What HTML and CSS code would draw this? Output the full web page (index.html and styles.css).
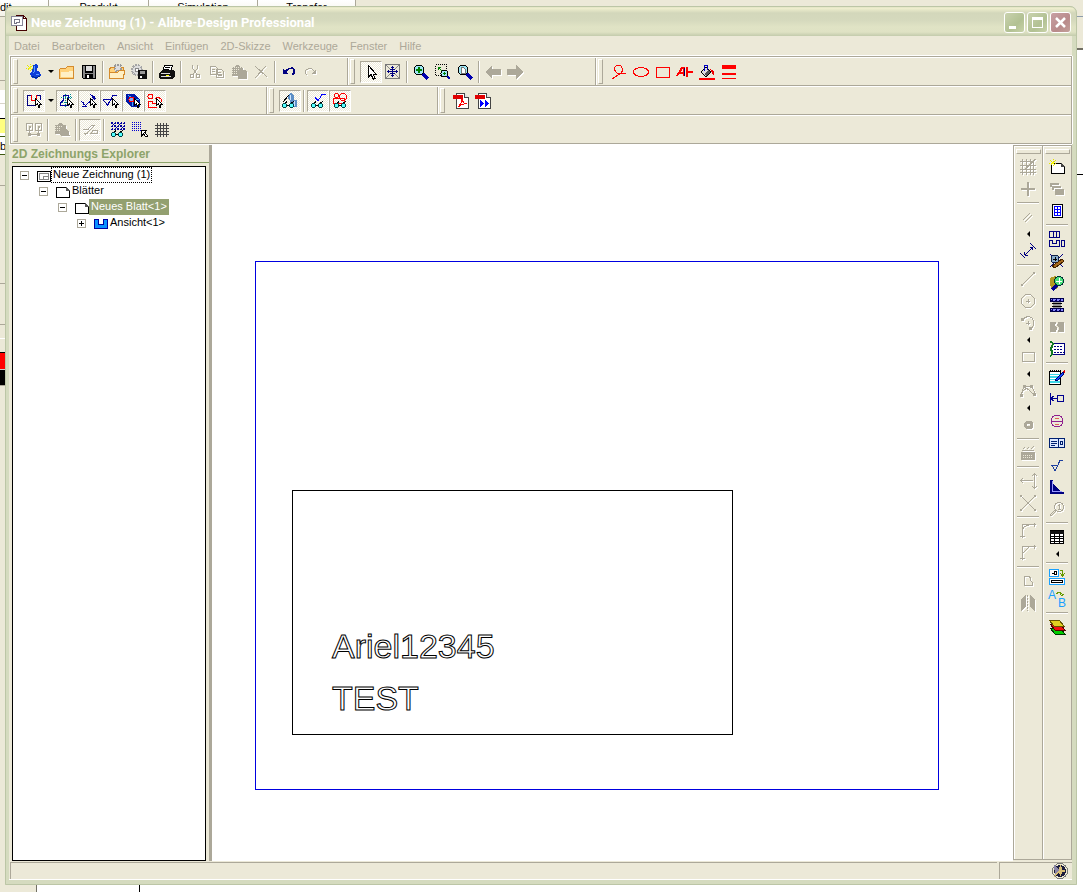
FILE: index.html
```html
<!DOCTYPE html>
<html lang="de">
<head>
    <meta charset="utf-8">
    <title>Neue Zeichnung (1) - Alibre-Design Professional</title>
    <link rel="stylesheet" href="styles.css">
</head>
<body>
    <!-- Shared icon parts -->
    <svg class="sprite" aria-hidden="true">
        <symbol id="cursor" viewBox="0 0 7 10"><path d="M.5.5V7.500L2.500 6L4 9.500L5 9L4 6H6Z" fill="#fff" stroke="#000"/></symbol>
        <symbol id="glasses" viewBox="0 0 14 7"><path d="M2 3L5 .5M8 3L12 .5M4 4.500H8" stroke="#000" fill="none"/><circle cx="2.500" cy="4.500" r="2" fill="#5ff" stroke="#044"/><circle cx="9.500" cy="4.500" r="2" fill="#5ff" stroke="#044"/></symbol>
        <symbol id="sparkle" viewBox="0 0 8 8"><path d="M4 0V8M0 4H8M1 1L7 7M7 1L1 7" stroke="#e6e600" stroke-dasharray="1 1"/><path d="M3 3h2v2h-2z" fill="#ff0"/></symbol>
    </svg>

    <!-- Application behind the window -->
    <div class="behind">
        <div class="behind-tabs">
            <span>dit</span><span>Produkt</span><span>Simulation</span><span>Transfer</span>
        </div>
        <div class="behind-left"><span>be</span></div>
        <div class="behind-right"></div>
        <div class="behind-bottom"></div>
    </div>

    <div class="window">
        <div class="titlebar">
            <svg class="icon" viewBox="0 0 16 16"><path d="M5.500.5H12.500L15.500 3.500V15.500H5.500Z" fill="#fff" stroke="#400"/><path d="M12.500.5V3.500H15.500" fill="none" stroke="#400"/><path d="M.5 1.500H11.500V10.500H.5Z" fill="#fff" stroke="#889"/><path d="M3.500 4.500H8.500V7.500H5.500V8.500H3.500Z" fill="#fff" stroke="#778"/></svg>
            <h1>Neue Zeichnung (1) - Alibre-Design Professional</h1>
            <button class="win-button" aria-label="Minimieren"><svg viewBox="0 0 19 19"><path d="M4 13h7v3h-7z" fill="#fff"/></svg></button>
            <button class="win-button" aria-label="Maximieren"><svg viewBox="0 0 19 19"><path d="M4 4h11v11h-11zM5 7v7h9v-7z" fill="#fff" fill-rule="evenodd"/></svg></button>
            <button class="win-button win-close" aria-label="Schließen"><svg viewBox="0 0 19 19"><path d="M5 5L14 14M14 5L5 14" stroke="#fff" stroke-width="2.500"/></svg></button>
        </div>

        <div class="menubar">
            <button>Datei</button>
            <button>Bearbeiten</button>
            <button>Ansicht</button>
            <button>Einfügen</button>
            <button>2D-Skizze</button>
            <button>Werkzeuge</button>
            <button>Fenster</button>
            <button>Hilfe</button>
        </div>

        <div class="dock">
            <div class="dock-row">
                <div class="toolbar bar-file">
                    <button class="tool" aria-label="Neu"><svg class="icon" viewBox="0 0 16 16"><path d="M7 1L10 0L12 2L11 7L14 8L15 12L10 15L5 13L4 9L6 7Z" fill="#0b3dd9"/><path d="M8 2L9 7L7 9M10 10L13 10" stroke="#5b9cff" fill="none"/><path d="M6 12L10 14L14 12" stroke="#002a86" fill="none"/><use href="#sparkle" width="8" height="8"/></svg></button>
                    <button class="drop" aria-label="Neu Auswahl"></button>
                    <button class="tool" aria-label="Öffnen"><svg class="icon" viewBox="0 0 16 16"><path d="M.5 14.500V5.500L1.500 4.500H6.500L8.500 2.500H14.500V14.500Z" fill="#ffd27a" stroke="#d58b2c"/><path d="M2 13V8H9L10 7H14V13Z" fill="#fff0c4"/></svg></button>
                    <button class="tool" aria-label="Speichern"><svg class="icon" viewBox="0 0 16 16"><path d="M1 1H15V15H2L1 14Z" fill="#000"/><path d="M2 2H4V9H12V2H14V14H2Z" fill="#888"/><path d="M5 2H11V7H5Z" fill="#ddd"/><path d="M4 10H12V15H4Z" fill="#000"/><path d="M6 11H8V14H6Z" fill="#fff"/></svg></button>
                    <span class="sep"></span>
                    <button class="tool" aria-label="Aus Ablage öffnen"><svg class="icon" viewBox="0 0 16 16"><path d="M.5 14.500V5.500L1.500 3.500H14.500V14.500Z" fill="#ffd27a" stroke="#d58b2c"/><circle cx="9" cy="4" r="3.500" fill="#ddd" stroke="#999" stroke-width="2" stroke-dasharray="2 1"/><path d="M.5 14.500V8.500H8.500L10.500 6.500H15.500L14.500 14.500Z" fill="#fff0c4" stroke="#d58b2c"/></svg></button>
                    <button class="tool" aria-label="In Ablage speichern"><svg class="icon" viewBox="0 0 16 16"><circle cx="6" cy="6" r="5" fill="#ddd" stroke="#a5a5a5" stroke-width="2" stroke-dasharray="2 1"/><circle cx="6" cy="6" r="2" fill="#fff" stroke="#888"/><path d="M7 6H16V15H7Z" fill="#111"/><path d="M9 7H14V10H9Z" fill="#999"/><path d="M9 12H11V14H9Z" fill="#fff"/></svg></button>
                    <span class="sep"></span>
                    <button class="tool" aria-label="Drucken"><svg class="icon" viewBox="0 0 16 16"><path d="M5.500 1.500H13.500L11.500 7.500H3.500Z" fill="#fff" stroke="#000"/><path d="M6 3.500H11M5 5.500H10" stroke="#000"/><path d="M1 8L4 6H14L16 7V12L13 15H1L0 13V9Z" fill="#111"/><path d="M2 9.500H11M2 12.500H12" stroke="#ddd"/><path d="M7 11h3v1h-3z" fill="#ff0"/></svg></button>
                    <span class="sep"></span>
                    <button class="tool" disabled aria-label="Ausschneiden"><svg class="icon" viewBox="0 0 16 16"><path d="M5.500 1V4L9.500 10M10.500 1V4L6.500 10"/><circle cx="5" cy="12" r="2"/><circle cx="11" cy="12" r="2"/></svg></button>
                    <button class="tool" disabled aria-label="Kopieren"><svg class="icon" viewBox="0 0 16 16"><path d="M1.500 2.500H6.500L8.500 4.500V10.500H1.500ZM3 5.500H6M3 7.500H6M7.500 5.500H12.500L14.500 7.500V13.500H7.500ZM9 8.500H12M9 10.500H13M9 11.500H13"/></svg></button>
                    <button class="tool" disabled aria-label="Einfügen"><svg class="icon" viewBox="0 0 16 16"><path d="M1 3H4L5 1H8L9 3H12V6H15L16 8V15H7V12H1Z" class="solid"/><path d="M1 3.500H12M1 5.500H8M1 7.500H7M1 9.500H7" class="etch"/></svg></button>
                    <button class="tool" disabled aria-label="Löschen"><svg class="icon" viewBox="0 0 16 16"><path d="M2 2L14 13M13 2L2 14"/></svg></button>
                    <span class="sep"></span>
                    <button class="tool" aria-label="Rückgängig"><svg class="icon" viewBox="0 0 16 16"><path d="M3 9L6 6Q8 4 11 4Q14 5 13 9L11 11" fill="none" stroke="#000080" stroke-width="1.500"/><path d="M2 5V10H7Z" fill="#000080"/></svg></button>
                    <button class="tool" disabled aria-label="Wiederholen"><svg class="icon" viewBox="0 0 16 16"><path d="M12 8L9 5Q6 4 3 6Q1 8 4 11"/><path d="M13 5V10H8Z" class="solid"/></svg></button>
                </div>
                <div class="toolbar bar-view">
                    <button class="tool pressed" aria-label="Auswählen"><svg class="icon" viewBox="0 0 16 16"><path d="M5.500 1.500V13L8 10.500L10.500 15.500L12 14.500L10 10H13Z" fill="#fff" stroke="#000"/></svg></button>
                    <button class="tool" aria-label="Verschieben"><svg class="icon" viewBox="0 0 16 16"><path d="M.5.5H14.500V14.500H.5Z" fill="none" stroke="#777"/><path d="M1 1L5 5M14 1L10 5M1 14L5 10M14 14L10 10" stroke="#888"/><path d="M7.500 2V13M2 7.500H13M6 3.500H9M6 11.500H9M3.500 6V9M11.500 6V9M5 5.500H10M5 9.500H10" stroke="#000080"/></svg></button>
                    <span class="sep"></span>
                    <button class="tool" aria-label="Zoom"><svg class="icon" viewBox="0 0 16 16"><path d="M10 10L15 15" stroke="#0000b0" stroke-width="3"/><circle cx="6" cy="6" r="5" fill="#9fe8f5" stroke="#000"/><path d="M6 3V9M3 6H9" stroke="#008000" stroke-width="2"/></svg></button>
                    <button class="tool" aria-label="Zoom Fenster"><svg class="icon" viewBox="0 0 16 16"><path d="M.5.5H11.500V11.500H.5Z" fill="none" stroke="#000" stroke-dasharray="1 1"/><path d="M3 3L7 7M3 3.500H6M3.500 3V6" stroke="#008000"/><path d="M12 12L15 15" stroke="#0000b0" stroke-width="2"/><circle cx="9.500" cy="9.500" r="3.500" fill="#9fe8f5" stroke="#000"/><path d="M9.500 8V11M8 9.500H11" stroke="#008000"/></svg></button>
                    <button class="tool" aria-label="Alles zeigen"><svg class="icon" viewBox="0 0 16 16"><path d="M10 10L15 15" stroke="#0000b0" stroke-width="3"/><circle cx="6" cy="6" r="5" fill="#9fe8f5" stroke="#000"/><path d="M4.500 3.500H6.500L8.500 5.500V9.500H4.500Z" fill="#fff" stroke="#777"/></svg></button>
                    <span class="sep"></span>
                    <button class="tool" disabled aria-label="Zurück"><svg class="icon" viewBox="0 0 16 16"><path d="M0 8L7 1V5H16V11H7V15Z" class="solid"/></svg></button>
                    <button class="tool" disabled aria-label="Vor"><svg class="icon" viewBox="0 0 16 16"><path d="M16 8L9 1V5H0V11H9V15Z" class="solid"/></svg></button>
                </div>
                <div class="toolbar bar-fill">
                    <button class="tool red" aria-label="Notiz"><svg class="icon" viewBox="0 0 16 16"><path d="M1 15L10 9Q13 6 10 2Q7 0 4 3Q3 7 6 9L15 10"/></svg></button>
                    <button class="tool red" aria-label="Ellipse"><svg class="icon" viewBox="0 0 16 16"><ellipse cx="8" cy="8" rx="7.500" ry="4.500"/></svg></button>
                    <button class="tool red" aria-label="Rechteck"><svg class="icon" viewBox="0 0 16 16"><path d="M1.500 3.500H14.500V13.500H1.500Z"/></svg></button>
                    <button class="tool red" aria-label="Text"><svg class="icon" viewBox="0 0 16 16"><path d="M0 12L5 4H7V12M3 9H7M10 3V13M10 8H16" stroke-width="2"/><path d="M7.500 4V12" stroke="#006"/></svg></button>
                    <button class="tool" aria-label="Füllfarbe"><svg class="icon" viewBox="0 0 16 16"><path d="M2 8L7 3L12 8L7 13Z" fill="#ddd" stroke="#000"/><path d="M5 10L10 6L11 8L7 12Z" fill="#555"/><path d="M5.500 7V1.500H8.500V6" fill="none" stroke="#0000c0"/><path d="M11 5L15 7V12L13 9Z" fill="#e00"/><path d="M0 14H16V16H0Z" fill="#f00"/></svg></button>
                    <button class="tool" aria-label="Linienstärke"><svg class="icon" viewBox="0 0 16 16"><path d="M1 1H15V5H1ZM1 9H15V11H1ZM1 14H15V15H1Z" fill="#f00"/></svg></button>
                </div>
            </div>

            <div class="dock-row">
                <div class="toolbar bar-filter">
                    <button class="tool pressed" aria-label="Alle wählen"><svg class="icon" viewBox="0 0 16 16"><path d="M10 12.500H1.500V2.500H5.500M10.500 2.500H14.500V7" fill="none" stroke="#000080"/><path d="M5.500 2V7.500H10.500V2" fill="none" stroke="#f00"/><use href="#cursor" x="9" y="5" width="7" height="10"/></svg></button>
                    <button class="drop" aria-label="Filter Auswahl"></button>
                    <button class="tool pressed" aria-label="Flächen wählen"><svg class="icon" viewBox="0 0 16 16"><path d="M1 10.500L4.500 7V2.500H9.500V9.500H12M1.500 10V12.500H10" fill="none" stroke="#0000a0"/><path d="M2 4.500H14M6.500 1V14M11.500 1V6M3 9.500H9" fill="none" stroke="#088" stroke-dasharray="1 1"/><use href="#cursor" x="8" y="5" width="7" height="10"/></svg></button>
                    <button class="tool pressed" aria-label="Bemaßungen wählen"><svg class="icon" viewBox="0 0 16 16"><path d="M0 8L5 13M2.500 9V12M1 13.500H6M5 12L13 5M9 1L15 6M11 4.500H14M13.500 3V7" fill="none" stroke="#0000a0"/><use href="#cursor" x="9" y="5" width="7" height="10"/></svg></button>
                    <button class="tool pressed" aria-label="Symbole wählen"><svg class="icon" viewBox="0 0 16 16"><path d="M0 6.500H8L4.500 12L0 6.500M4.500 13L10 2.500H14" fill="none" stroke="#0000a0"/><use href="#cursor" x="9" y="5" width="7" height="10"/></svg></button>
                    <button class="tool pressed" aria-label="Körper wählen"><svg class="icon" viewBox="0 0 16 16"><path d="M1 1H9L15 6V14H6L1 9Z" fill="#0018a8"/><path d="M3 2L8 6H14M7 7V13" stroke="#4af" fill="none"/><circle cx="6.500" cy="6.500" r="2.500" fill="#7af" stroke="#f00"/><use href="#cursor" x="9" y="5" width="7" height="10"/></svg></button>
                    <button class="tool pressed" aria-label="Skizzen wählen"><svg class="icon" viewBox="0 0 16 16"><g fill="none" stroke="#f00"><circle cx="3.500" cy="3.500" r="2.500"/><path d="M1.500 8.500H5.500V10.500H9M1.500 8V14.500H10M8 6L11 4L14 6L14 9"/></g><use href="#cursor" x="9" y="5" width="7" height="10"/></svg></button>
                </div>
                <div class="toolbar bar-show">
                    <button class="tool pressed" aria-label="Teile anzeigen"><svg class="icon" viewBox="0 0 16 16"><path d="M6 2L9 0L12 2V7H15V14H10V10H8V7L6 6Z" fill="#5d8fc5"/><path d="M8.500 2V7M12.500 8V13" stroke="#cfe6ff"/><path d="M1 9L7 2" stroke="#000"/><use href="#glasses" x="0" y="8" width="14" height="7"/></svg></button>
                    <span class="sep"></span>
                    <button class="tool pressed" aria-label="Symbole anzeigen"><svg class="icon" viewBox="0 0 16 16"><path d="M5 4L8 8L12 1.500H16" fill="none" stroke="#00f"/><use href="#glasses" x="1" y="8" width="14" height="7"/></svg></button>
                    <button class="tool pressed" aria-label="Skizzen anzeigen"><svg class="icon" viewBox="0 0 16 16"><g fill="none" stroke="#f00"><circle cx="4.500" cy="2.500" r="2"/><circle cx="11" cy="4" r="3.500"/><path d="M1.500 5.500H12.500V10.500H1.500Z"/></g><use href="#glasses" x="2" y="8" width="14" height="7"/></svg></button>
                </div>
                <div class="toolbar bar-fill">
                    <button class="tool" aria-label="PDF veröffentlichen"><svg class="icon" viewBox="0 0 16 16"><path d="M3.500.5H11.500L15.500 4.500V15.500H3.500Z" fill="#fff" stroke="#444"/><path d="M11.500.5V4.500H15.500" fill="#ddd" stroke="#444"/><path d="M0 2H10V6H0Z" fill="#e00000"/><path d="M5 14Q9 10 9 6Q10 11 14 11Q9 10 5 14" fill="none" stroke="#f00"/></svg></button>
                    <button class="tool" aria-label="PDF senden"><svg class="icon" viewBox="0 0 16 16"><path d="M3.500.5H11.500L15.500 4.500V15.500H3.500Z" fill="#fff" stroke="#444"/><path d="M11.500.5V4.500H15.500" fill="#ddd" stroke="#444"/><path d="M0 2H10V6H0Z" fill="#e00000"/><path d="M5 7L9 10.500L5 14ZM10 7L14 10.500L10 14Z" fill="#00f"/></svg></button>
                </div>
            </div>

            <div class="dock-row">
                <div class="toolbar bar-fill">
                    <button class="tool" disabled aria-label="Verknüpfen"><svg class="icon" viewBox="0 0 16 16"><path d="M.5 1.500H6.500V8.500H.5ZM9.500 1.500H15.500V8.500H9.500ZM3.500 5V13M12.500 5V13M3 12.500H13" /><path d="M2 11h3v3h-3zM11 11h3v3h-3zM3 4h2v2h-2zM12 4h2v2h-2z" class="solid"/></svg></button>
                    <span class="sep"></span>
                    <button class="tool" disabled aria-label="Ansicht einfügen"><svg class="icon" viewBox="0 0 16 16"><path d="M1 3H4L5 1H8L9 3H12V7L15 9V11L16 14H8L5 12H1Z" class="solid"/><path d="M1 4.500H8M1 6.500H6M1 8.500H6" class="etch"/></svg></button>
                    <span class="sep"></span>
                    <button class="tool pressed" disabled aria-label="Auflösen"><svg class="icon" viewBox="0 0 16 16"><path d="M1 7.500H6L9 4M3 13L13 3M2 11.500H6M9 11.500H15V8.500H11ZM9 3.500H12"/></svg></button>
                    <span class="sep"></span>
                    <button class="tool" aria-label="Raster anzeigen"><svg class="icon" viewBox="0 0 16 16"><path d="M1 1.500H15M1 4.500H15M1 7.500H15M2.500 0V9M5.500 0V9M8.500 0V9M11.500 0V9M14.500 0V9M1 0L9 8M7 0L15 8" stroke="#0000a0" stroke-dasharray="2 1"/><use href="#glasses" x="1" y="8" width="14" height="7"/></svg></button>
                    <button class="tool" aria-label="Am Raster fangen"><svg class="icon" viewBox="0 0 16 16"><path d="M0 .5H10M0 2.500H10M0 4.500H10M0 6.500H10M0 8.500H10" stroke="#0000d0" stroke-dasharray="1 1"/><path d="M9.500 8.500H14.500L13 10.500L15.500 14L14 15L11.500 12L9.500 14Z" fill="#fff" stroke="#000"/></svg></button>
                    <button class="tool" aria-label="Raster"><svg class="icon" viewBox="0 0 16 16"><path d="M1 3.500H15M1 6.500H15M1 9.500H15M1 12.500H15M3.500 1V15M6.500 1V15M9.500 1V15M12.500 1V15" stroke="#444"/></svg></button>
                </div>
            </div>
        </div>

        <div class="workspace">
            <div class="explorer">
                <h2>2D Zeichnungs Explorer</h2>
                <ul class="tree">
                    <li>
                        <div class="node">
                            <span class="expander minus"></span>
                            <svg class="node-icon" viewBox="0 0 14 12"><path d="M.5.5H13.500V10.500H.5Z" fill="#fff" stroke="#000"/><path d="M2.500 2.500H11.500V8.500H2.500ZM6.500 8V5.500H11" fill="none" stroke="#888"/></svg>
                            <span class="label focused">Neue Zeichnung (1)</span>
                        </div>
                        <ul>
                            <li>
                                <div class="node">
                                    <span class="expander minus"></span>
                                    <svg class="node-icon" viewBox="0 0 14 12"><path d="M.5.5H10.500L13.500 3.500V10.500H.5Z" fill="#fff" stroke="#000"/><path d="M10 0V4H14Z" fill="#555"/></svg>
                                    <span class="label">Blätter</span>
                                </div>
                                <ul>
                                    <li>
                                        <div class="node">
                                            <span class="expander minus"></span>
                                            <svg class="node-icon" viewBox="0 0 14 12"><path d="M.5.5H10.500L13.500 3.500V10.500H.5Z" fill="#fff" stroke="#000"/><path d="M10 0V4H14Z" fill="#555"/></svg>
                                            <span class="label selected">Neues Blatt&lt;1&gt;</span>
                                        </div>
                                        <ul>
                                            <li>
                                                <div class="node">
                                                    <span class="expander minus plus"></span>
                                                    <svg class="node-icon" viewBox="0 0 14 12"><path d="M.5.5H4.500V5.500H9.500V.5H13.500V9.500H.5Z" fill="#0a90ff" stroke="#0000a0"/></svg>
                                                    <span class="label">Ansicht&lt;1&gt;</span>
                                                </div>
                                            </li>
                                        </ul>
                                    </li>
                                </ul>
                            </li>
                        </ul>
                    </li>
                </ul>
            </div>

            <div class="canvas">
                <div class="sheet">
                    <div class="view">
                        <p>Ariel12345</p>
                        <p>TEST</p>
                    </div>
                </div>
            </div>

            <div class="side-dock">
                <div class="side-bar">
                    <button class="tool" disabled aria-label="Skizze aktivieren"><svg class="icon" viewBox="0 0 16 16"><path d="M0 2.500H14M0 6.500H16M0 10.500H16M0 13.500H16M2.500 0V16M6.500 0V16M10.500 0V16M13.500 3V16"/><path d="M5 11L15 0" stroke-width="1.500"/></svg></button>
                    <button class="tool" disabled aria-label="Punkt"><svg class="icon" viewBox="0 0 16 16"><path d="M1 8H15M8 1V15" stroke-width="1.500"/></svg></button>
                    <span class="sep"></span>
                    <button class="tool" disabled aria-label="Parallele"><svg class="icon" viewBox="0 0 16 16"><path d="M3 11L10 4M5 13L12 6"/></svg></button>
                    <button class="drop" aria-label="Mehr Hilfslinien"></button>
                    <button class="tool" aria-label="Bemaßung"><svg class="icon" viewBox="0 0 16 16"><path d="M5 12L13 4M10 4.500H13M12.500 4V7M4.500 9V12M5 12.500H8M10 0L16 6M0 10L5 15" fill="none" stroke="#000080"/></svg></button>
                    <span class="sep"></span>
                    <button class="tool" disabled aria-label="Linie"><svg class="icon" viewBox="0 0 16 16"><path d="M2 14L14 2"/><path d="M1 13h2v2h-2zM13 1h2v2h-2z" class="solid"/></svg></button>
                    <button class="tool" disabled aria-label="Kreis"><svg class="icon" viewBox="0 0 16 16"><path d="M5.500 1.500H10.500L14.500 5.500V10.500L10.500 14.500H5.500L1.500 10.500V5.500ZM6 8.500H10M8.500 6V10"/></svg></button>
                    <button class="tool" disabled aria-label="Bogen"><svg class="icon" viewBox="0 0 16 16"><path d="M3 4Q7 0 12 3Q16 8 12 13M6 8.500H10M8.500 6V10"/><path d="M1 3h3v3h-3zM9 12h3v3h-3z" class="solid"/></svg></button>
                    <button class="drop" aria-label="Mehr Bögen"></button>
                    <button class="tool" disabled aria-label="Rechteck skizzieren"><svg class="icon" viewBox="0 0 16 16"><path d="M2.500 3.500H14.500V12.500H2.500Z"/></svg></button>
                    <button class="drop" aria-label="Mehr Rechtecke"></button>
                    <button class="tool" disabled aria-label="Spline"><svg class="icon" viewBox="0 0 16 16"><path d="M1 12Q5 3 9 7Q12 11 15 11M4 3.500H12M1 12L4 3M12 3L15 11"/><path d="M0 11h3v3h-3zM3 2h3v3h-3zM10 2h3v3h-3zM13 10h3v3h-3z" class="solid"/></svg></button>
                    <button class="drop" aria-label="Mehr Kurven"></button>
                    <button class="tool" disabled aria-label="Bezugspunkt"><svg class="icon" viewBox="0 0 16 16"><path d="M6 4H11L13 6V10L11 12H6L4 10V6ZM7 7V9H10V7Z" class="solid" fill-rule="evenodd"/></svg></button>
                    <span class="sep"></span>
                    <button class="tool" disabled aria-label="Text skizzieren"><svg class="icon" viewBox="0 0 16 16"><path d="M1 7H15V15H1ZM2 5H14V6H2Z" class="solid"/><path d="M3 4L5 2M7 4L9 2M11 4L14 1"/><path d="M3 10.500H13M3 12.500H13" class="etch"/></svg></button>
                    <span class="sep"></span>
                    <button class="tool" disabled aria-label="Verlängern"><svg class="icon" viewBox="0 0 16 16"><path d="M0 7.500H13M14.500 1V15M12 3L14.500 1L17 3M12 13L14.500 15L17 13M3 5L1 7.500L3 10"/></svg></button>
                    <button class="tool" disabled aria-label="Trimmen"><svg class="icon" viewBox="0 0 16 16"><path d="M1 1L15 15M15 1L1 15"/><path d="M0 0h2v2h-2zM14 0h2v2h-2zM0 14h2v2h-2zM14 14h2v2h-2z" class="solid"/></svg></button>
                    <span class="sep"></span>
                    <button class="tool" disabled aria-label="Verrunden"><svg class="icon" viewBox="0 0 16 16"><path d="M2.500 15V1.500H16M2 8Q3 3 9 2M14.500 0V4M0 13.500H5" /></svg></button>
                    <button class="tool" disabled aria-label="Fase"><svg class="icon" viewBox="0 0 16 16"><path d="M2.500 15V1.500H16M2 9L9 2M14.500 0V4M0 13.500H5"/></svg></button>
                    <span class="sep"></span>
                    <button class="tool" disabled aria-label="Versatz"><svg class="icon" viewBox="0 0 16 16"><path d="M4.500 3.500H9.500L10.500 5.500V7.500L12.500 9.500V12.500H4.500Z"/></svg></button>
                    <button class="tool" disabled aria-label="Spiegeln"><svg class="icon" viewBox="0 0 16 16"><path d="M1 4L6 0V12L1 16ZM10 0L15 4V16L10 12Z" class="solid"/><path d="M7.500 0V16" stroke-dasharray="2 1"/></svg></button>
                </div>
                <div class="side-bar">
                    <button class="tool" aria-label="Neues Blatt"><svg class="icon" viewBox="0 0 16 16"><path d="M2.500 4.500H12.500L15.500 7.500V14.500H2.500Z" fill="#fff" stroke="#000"/><path d="M12 4V8H16Z" fill="#444"/><use href="#sparkle" width="8" height="8"/></svg></button>
                    <button class="tool" disabled aria-label="Standardansichten"><svg class="icon" viewBox="0 0 16 16"><path d="M1 2H10V4H3V6H1ZM3 5H12V7H5V9H3ZM6 8H15V14H6Z" class="solid"/></svg></button>
                    <button class="tool" aria-label="Blatt bearbeiten"><svg class="icon" viewBox="0 0 16 16"><path d="M3.500 1.500H13.500V14.500H3.500Z" fill="#fff" stroke="#000"/><path d="M5.500 3.500H11.500V12.500H5.500ZM8.500 3V13M5 6.500H12M5 9.500H12" fill="none" stroke="#00f"/></svg></button>
                    <span class="sep"></span>
                    <button class="tool" aria-label="Ansichten"><svg class="icon" viewBox="0 0 16 16"><path d="M.5.5H10.500V6.500H.5ZM4.500 1V6M7.500 1V6M.5 9.500H3.500V12.500H7.500V9.500H10.500V15.500H.5ZM12.500 9.500H15.500V15.500H12.500Z" fill="none" stroke="#000080"/></svg></button>
                    <button class="tool" aria-label="Hilfsansicht"><svg class="icon" viewBox="0 0 16 16"><path d="M1 1L14 14M14 1L1 14" stroke="#000080"/><circle cx="6" cy="6" r="4" fill="#8ac" stroke="#124"/><path d="M4 6.500H8M6.500 4V8" stroke="#000"/><path d="M3 13L13 6L15 8L6 15Z" fill="#a56a20" stroke="#420"/></svg></button>
                    <button class="tool" aria-label="Detailansicht"><svg class="icon" viewBox="0 0 16 16"><path d="M1 3L6 1L9 3V13L4 15L1 10Z" fill="#b39a23"/><path d="M8 10L3 15" stroke="#000090" stroke-width="3"/><circle cx="10" cy="6" r="4.500" fill="#4be07c" stroke="#033"/><path d="M10.500 3V9M7 6.500H13" stroke="#fff"/></svg></button>
                    <button class="tool" aria-label="Schnittansicht"><svg class="icon" viewBox="0 0 16 16"><path d="M4 5H12V11H4Z" fill="#999"/><path d="M1.500 1.500H14.500V4.500H1.500ZM1.500 11.500H14.500V14.500H1.500Z" fill="#88f" stroke="#004"/><path d="M2 5L5 1M6 5L9 1M10 5L13 1M2 15L5 11M6 15L9 11M10 15L13 11" stroke="#006"/><path d="M3 6.500H13M3 9.500H13" stroke="#000"/></svg></button>
                    <button class="tool" disabled aria-label="Bruchansicht"><svg class="icon" viewBox="0 0 16 16"><path d="M1 3H7L6 7L8 9L7 13H1ZM9 3H15V13H9L10 9L8 7Z" class="solid"/></svg></button>
                    <button class="tool" aria-label="Teilschnitt"><svg class="icon" viewBox="0 0 16 16"><path d="M3 2.500H15.500V13.500H3" fill="#fff" stroke="#000080"/><path d="M5 5.500H14M5 8.500H14M5 11.500H15" stroke="#000080" stroke-dasharray="2 1"/><path d="M1 1Q5 1 3 5Q1 8 3 11Q4 14 1 15" fill="none" stroke="#107820" stroke-width="2"/></svg></button>
                    <span class="sep"></span>
                    <button class="tool" aria-label="Notiz bearbeiten"><svg class="icon" viewBox="0 0 16 16"><path d="M.5 2.500H11.500V15.500H.5Z" fill="#fff" stroke="#000"/><path d="M1 5h10v1h-10zM1 7h10v2h-10zM1 10h10v1h-10zM1 12h10v2h-10z" fill="#3cd7e8"/><path d="M1 1.500H12" stroke="#000" stroke-width="2" stroke-dasharray="1 1"/><path d="M6 11L14 3L15 5L8 12Z" fill="#1048ff" stroke="#000070"/><path d="M13 3L16 1V4Z" fill="#d00"/></svg></button>
                    <button class="tool" aria-label="Bezug"><svg class="icon" viewBox="0 0 16 16"><path d="M1.500 2V14M2 7.500H8M4.500 5L2 7.500L4.500 10M8.500 4.500H14.500V10.500H8.500Z" fill="none" stroke="#000090"/></svg></button>
                    <button class="tool" aria-label="Positionsnummer"><svg class="icon" viewBox="0 0 16 16"><circle cx="8" cy="8" r="6" fill="none" stroke="#902090"/><path d="M2 8.500H14" stroke="#902090"/><path d="M6 5.500H10M6 11.500H10" stroke="#d65" /></svg></button>
                    <button class="tool" aria-label="Form- und Lagetoleranz"><svg class="icon" viewBox="0 0 16 16"><path d="M.5 3.500H15.500V12.500H.5ZM9.500 3V13" fill="#dce8ff" stroke="#002070"/><path d="M2 6.500H8M2 8.500H8M2 10.500H6" stroke="#002070"/><circle cx="12.500" cy="8" r="1.500" fill="none" stroke="#002070"/></svg></button>
                    <button class="tool" aria-label="Oberfläche"><svg class="icon" viewBox="0 0 16 16"><path d="M2 8.500H9M3 8L6 14L11 3.500H14" fill="none" stroke="#1c3fa0"/></svg></button>
                    <button class="tool" aria-label="Schweißsymbol"><svg class="icon" viewBox="0 0 16 16"><path d="M1 1H4V5L12 13H15V15H1Z" fill="#000080"/><path d="M3.500 2V12.500H13" stroke="#99f" fill="none"/></svg></button>
                    <button class="tool" disabled aria-label="Prüfsymbol"><svg class="icon" viewBox="0 0 16 16"><circle cx="10" cy="6" r="4.500"/><path d="M6 9L1 14L2 15L7 10M9 5L10.500 4V8M9 8.500H12"/></svg></button>
                    <span class="sep"></span>
                    <button class="tool" aria-label="Stückliste"><svg class="icon" viewBox="0 0 16 16"><path d="M1.500 1.500H14.500V14.500H1.500Z" fill="#fff" stroke="#000"/><path d="M1 2h14v3h-14z" fill="#111"/><path d="M2 7.500H14M2 9.500H14M2 12.500H14M5.500 5V14M10.500 5V14" stroke="#000"/></svg></button>
                    <button class="drop" aria-label="Mehr Tabellen"></button>
                    <span class="sep"></span>
                    <button class="tool" aria-label="Ansicht tauschen"><svg class="icon" viewBox="0 0 16 16"><path d="M.5.5H9.500V7.500H.5ZM.5 9.500H15.500V15.500H.5Z" fill="#fff" stroke="#18a0ff"/><path d="M2.500 4.500H5.500V2.500H7.500V5.500H5M2.500 11.500H13.500V13.500H2.500Z" fill="none" stroke="#000"/><path d="M11 1.500H13.500V6M11 4L13.500 7L16 4" fill="none" stroke="#690"/></svg></button>
                    <button class="tool" aria-label="Text ersetzen"><svg class="icon" viewBox="0 0 16 16"><text x="-1" y="8" class="glyph">A</text><text x="9" y="16" class="glyph">B</text><path d="M7 3L10 1L13 3V5M11 3L13 5L15 3" fill="none" stroke="#690"/></svg></button>
                    <span class="sep"></span>
                    <button class="tool" aria-label="Layer"><svg class="icon" viewBox="0 0 16 16"><path d="M1 9L11 9L16 15H6Z" fill="#0c0" stroke="#030"/><path d="M1 5H11L16 11H6Z" fill="#f01010" stroke="#500"/><path d="M0 1H10L15 7H5Z" fill="#e0d020" stroke="#650"/></svg></button>
                </div>
            </div>
        </div>

        <div class="statusbar">
            <div class="status-text"></div>
            <div class="status-icon"><svg class="icon" viewBox="0 0 16 16"><circle cx="8" cy="8" r="7.500" fill="#eee9d0" stroke="#777"/><circle cx="8" cy="8" r="6" fill="#1b1b3c"/><path d="M2 14L9 1L10 7L15 8L10 9L9 14L7 10Z" fill="#d8bd75"/><path d="M2 2L7 7L3 12Z" fill="#8a86a8"/></svg></div>
        </div>
    </div>
</body>
</html>
```
FILE: styles.css
```css
* {
    box-sizing: border-box;
}

body {
    margin: 0;
    height: 100vh;
    overflow: hidden;
    background-color: #ece9d8;
    font-family: "Liberation Sans", Arial, sans-serif;
    font-size: 11px;
    color: #000;
}

h1, h2, p, ul {
    margin: 0;
    padding: 0;
}

ul {
    list-style: none;
}

button {
    margin: 0;
    padding: 0;
    border: none;
    background: none;
    font: inherit;
}

.sprite {
    position: absolute;
    width: 0;
    height: 0;
}

/* Application behind the window */
.behind {
    position: absolute;
    inset: 0;
    z-index: -1;
}

.behind-tabs {
    display: grid;
    grid-template-columns: 49px 100px 109px 98px;
    height: 16px;
    line-height: 14px;
    text-align: center;
}

.behind-tabs span {
    border-right: 1px solid #aca899;
    background: linear-gradient(#fff, #f4f2e8);
}

.behind-tabs span:first-child {
    text-align: left;
}

.behind-left {
    position: absolute;
    top: 16px;
    bottom: 0;
    left: 0;
    width: 5px;
    background: linear-gradient(#aca899 1px, #ece9d8 1px 64px, #aca899 64px 65px, #ece9d8 65px 74px, #fff 74px 87px, #d8d5c8 87px 88px, #fff 88px 102px, #000 102px 103px, #ffff80 103px 117px, #fff 117px 120px, #3c5a10 120px 121px, #fff 121px 138px, #3c5a10 138px 139px, #ece9d8 139px 169px, #aca899 169px 170px, #ece9d8 170px 267px, #aca899 267px 268px, #ece9d8 268px 308px, #aca899 308px 309px, #ece9d8 309px 322px, #fff 322px 323px, #ece9d8 323px 336px, #000 336px 337px, #f00 337px 353px, #ccc 353px 354px, #000 354px 369px, #aca899 369px 370px, #ece9d8 370px);
}

.behind-left span {
    display: block;
    padding-top: 124px;
}

.behind-right {
    position: absolute;
    top: 0;
    right: 0;
    bottom: 0;
    width: 12px;
    background: linear-gradient(#ece9d8 16px, #8d9cab 16px 17px, #ece9d8 17px 48px, #716f64 48px 50px, #fff 50px 174px, #000 174px 175px, #fff 175px);
}

.behind-bottom {
    position: absolute;
    right: 0;
    bottom: 0;
    left: 36px;
    height: 12px;
    border-left: 1px solid #716f64;
    background: linear-gradient(90deg, #fff 102px, #000 102px 103px, #fff 103px);
}

/* Window */
.window {
    display: flex;
    flex-direction: column;
    height: calc(100vh - 13px);
    margin-right: 6px;
    margin-left: 5px;
    border: solid #d5dbbf;
    border-width: 0 5px 5px 4px;
    border-radius: 7px 7px 0 0;
    background-color: #ece9d8;
    outline: 1px solid #bcc6a6;
    outline-offset: -1px;
    position: relative;
    top: 6px;
}

.titlebar {
    display: flex;
    align-items: center;
    gap: 2px;
    flex: 0 0 30px;
    margin: 0 -4px;
    padding: 3px 5px 0 6px;
    border-radius: 7px 7px 0 0;
    background: linear-gradient(#c9cdb1, #f0f0cf 2px, #d3d7bb 7px, #d5d9bd 14px, #e0e3c5 21px, #dfe2c4 26px, #c3cbac);
}

.titlebar h1 {
    flex: 1;
    padding-left: 2px;
    color: #fff;
    font-family: Roboto, sans-serif;
    font-size: 13px;
    font-weight: bold;
    white-space: nowrap;
}

.icon {
    display: block;
    flex: none;
    width: 16px;
    height: 16px;
    overflow: visible;
    shape-rendering: crispEdges;
}

.win-button {
    width: 21px;
    height: 21px;
    border: 1px solid #fff;
    border-radius: 3px;
    background: linear-gradient(135deg, #c9d2ae, #b2c193 60%, #c8d2a8);
}

.win-close {
    background: linear-gradient(135deg, #c8a0a4, #b98b8b 60%, #c4a09a);
}

.win-button svg {
    display: block;
}

.menubar {
    display: flex;
    gap: 12px;
    flex: 0 0 20px;
    padding-left: 5px;
    border-bottom: 1px solid #fff;
}

.menubar button {
    color: #aca899;
}

/* Docked toolbars */
.dock {
    flex: none;
    margin-left: 1px;
    border: 1px solid #aca899;
    border-bottom: none;
    box-shadow: -1px 0 0 #fff, 1px 0 0 #fff;
}

.dock-row {
    display: flex;
    height: 29px;
}

.toolbar {
    display: flex;
    align-items: center;
    border-top: 1px solid #fff;
    border-bottom: 1px solid #aca899;
    box-shadow: inset 1px 0 0 #fff, inset -1px 0 0 #aca899;
}

.toolbar::before {
    content: "";
    flex: none;
    width: 3px;
    height: 23px;
    margin: 0 5px 0 2px;
    border: 1px solid #fff;
    border-right-color: #aca899;
    border-bottom-color: #aca899;
}

.bar-file {
    flex: 0 0 337px;
}

.bar-view {
    flex: 0 0 248px;
}

.bar-filter {
    flex: 0 0 256px;
}

.bar-show {
    flex: 0 0 171px;
}

.bar-fill {
    flex: 1;
    box-shadow: inset 1px 0 0 #fff;
}

.tool {
    display: flex;
    align-items: center;
    justify-content: center;
    flex: none;
    width: 22px;
    height: 22px;
}

.pressed {
    border: 1px solid #fff;
    border-top-color: #aca899;
    border-left-color: #aca899;
    background: repeating-conic-gradient(#fff 0 25%, #ece9d8 0 50%) 0 0 / 2px 2px;
}

.tool:disabled .icon {
    fill: none;
    stroke: #aca899;
    filter: drop-shadow(1px 1px 0 #fff);
}

.tool:disabled .solid {
    fill: #aca899;
    stroke: none;
}

.etch {
    stroke: #ece9d8;
    stroke-dasharray: 1 1;
}

.red .icon {
    fill: none;
    stroke: #f00;
}

.drop {
    display: flex;
    align-items: center;
    justify-content: center;
    flex: none;
    width: 11px;
    height: 22px;
}

.drop::before {
    content: "";
    border: 3px solid transparent;
    border-top-color: #000;
    border-bottom-width: 0;
}

.sep {
    flex: none;
    width: 2px;
    height: 22px;
    margin: 0 2px;
    border-left: 1px solid #aca899;
    background-color: #fff;
}

.glyph {
    fill: #18a0ff;
    font-size: 12px;
}

/* Work area */
.workspace {
    display: flex;
    flex: 1;
    min-height: 0;
    border-top: 1px solid #fff;
}

.explorer {
    display: flex;
    flex-direction: column;
    flex: 0 0 203px;
    padding: 0 3px;
    border-right: 3px solid #aca899;
}

.explorer h2 {
    height: 18px;
    margin: 0 -3px 3px 0;
    border-bottom: 1px solid #8da36a;
    color: #8da36a;
    font-size: 12px;
    line-height: 18px;
    white-space: nowrap;
}

.tree {
    flex: 1;
    padding-left: 7px;
    border: 1px solid #000;
    background-color: #fff;
}

.tree ul {
    padding-left: 19px;
}

.node {
    display: flex;
    align-items: center;
    height: 16px;
}

.expander {
    width: 9px;
    height: 9px;
    margin: 1px 8px 0 0;
    border: 1px solid #aca899;
}

.minus {
    background: linear-gradient(#000, #000) center / 5px 1px no-repeat;
}

.plus {
    background: linear-gradient(#000, #000) center / 5px 1px no-repeat, linear-gradient(#000, #000) center / 1px 5px no-repeat;
}

.node-icon {
    width: 14px;
    height: 12px;
    margin-top: 3px;
    shape-rendering: crispEdges;
}

.label {
    padding: 0 2px 2px;
    line-height: 14px;
    white-space: nowrap;
}

.focused {
    outline: 1px dotted #000;
    outline-offset: -1px;
}

.selected {
    background-color: #93a070;
    color: #fff;
}

.canvas {
    display: flex;
    flex: 1;
    min-width: 0;
    background-color: #fff;
}

.sheet {
    display: flex;
    align-items: flex-end;
    flex: 1;
    margin: 116px 74px 71px 43px;
    padding: 0 205px 54px 36px;
    border: 1px solid #0000e0;
}

.view {
    flex: 1;
    padding: 129px 39px 10px;
    border: 1px solid #000;
}

.view p {
    color: #fff;
    font-size: 34px;
    line-height: 52px;
    -webkit-text-stroke: 1px #000;
}

/* Vertical toolbars */
.side-dock {
    display: flex;
    flex: none;
    margin-bottom: 1px;
    border: 1px solid #aca899;
    border-right: none;
}

.side-bar {
    display: flex;
    flex-direction: column;
    align-items: center;
    width: 29px;
    border-right: 1px solid #aca899;
    box-shadow: inset 1px 1px 0 #fff;
}

.side-bar::before {
    content: "";
    flex: none;
    width: 23px;
    height: 3px;
    margin: 3px 0 2px;
    border: 1px solid #fff;
    border-right-color: #aca899;
    border-bottom-color: #aca899;
}

.side-bar .sep {
    width: 22px;
    height: 2px;
    margin: 2px 0;
    border-top: 1px solid #aca899;
    border-left: none;
}

.side-bar .drop {
    width: 22px;
    height: 12px;
}

.side-bar .drop::before {
    border: 3px solid transparent;
    border-right-color: #000;
    border-left-width: 0;
}

/* Status bar */
.statusbar {
    display: flex;
    gap: 2px;
    flex: 0 0 19px;
    padding: 1px 0 0 1px;
    border-bottom: 1px solid #fff;
}

.status-text {
    flex: 1;
    border-top: 1px solid #aca899;
    border-left: 1px solid #aca899;
}

.status-icon {
    display: flex;
    align-items: center;
    justify-content: flex-end;
    flex: 0 0 73px;
    padding-right: 4px;
    border-top: 1px solid #aca899;
    border-left: 1px solid #aca899;
}
```
